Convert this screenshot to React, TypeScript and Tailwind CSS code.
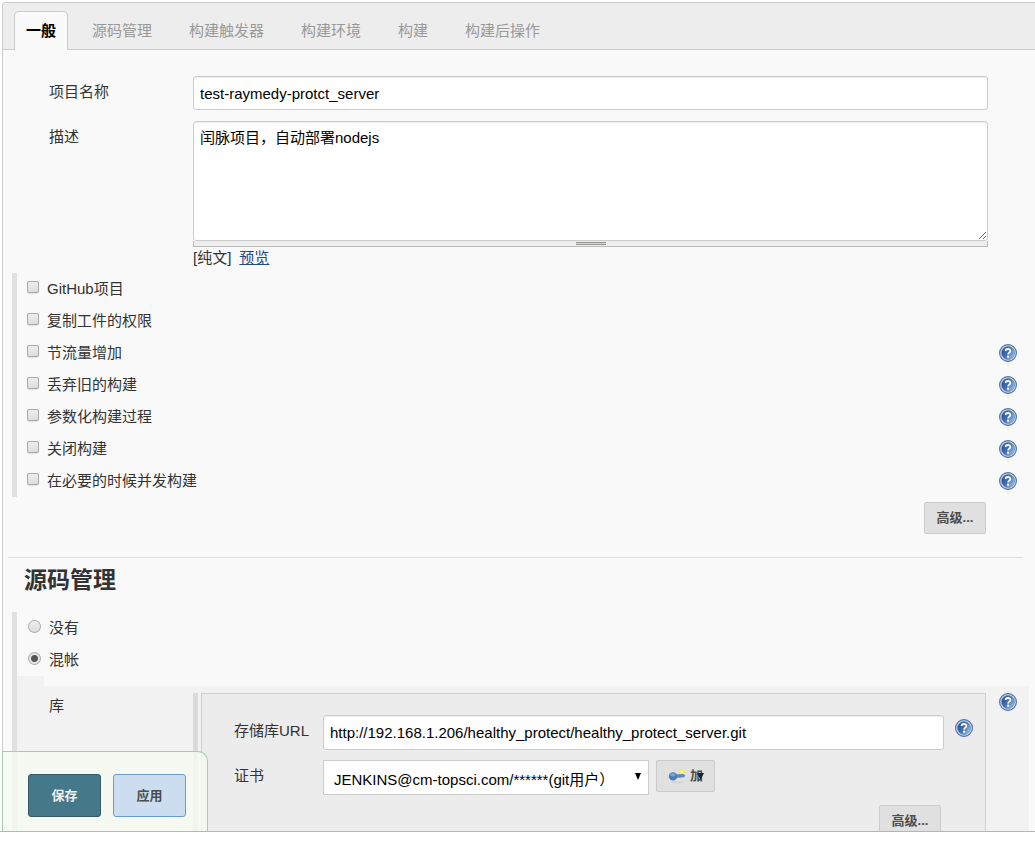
import React from "react";

const tabs = ["一般", "源码管理", "构建触发器", "构建环境", "构建", "构建后操作"];

const options = [
  { id: "github", label: "GitHub项目", help: false },
  { id: "copy-artifact", label: "复制工件的权限", help: false },
  { id: "throttle", label: "节流量增加", help: true },
  { id: "discard", label: "丢弃旧的构建", help: true },
  { id: "params", label: "参数化构建过程", help: true },
  { id: "disable", label: "关闭构建", help: true },
  { id: "concurrent", label: "在必要的时候并发构建", help: true },
];

const inputClass =
  "min-w-0 flex-1 rounded-[3px] border border-[#ccc] bg-white px-1.5 text-black shadow-[inset_0_1px_1px_rgba(0,0,0,0.075)] outline-none";

const radioClass =
  "mb-1 h-[13px] w-[13px] appearance-none rounded-full border border-[#a8a8a8] bg-linear-to-b from-[#eee] to-[#dcdcdc] checked:bg-[radial-gradient(circle,#555_0_3px,#e4e4e4_4px)]";

const greyButton =
  "h-8 rounded-[2px] border border-[#ccc] bg-[#e0e0e0] text-[13px] font-bold text-[#4d4d4d]";

const HelpButton = () => (
  <button type="button" aria-label="帮助" className="shrink-0">
    <svg className="block h-[18px] w-[18px]" viewBox="0 0 18 18">
      <defs>
        <linearGradient id="help-fill" x1="0" y1="0.2" x2="1" y2="0.8">
          <stop offset="0" stopColor="#24508f" />
          <stop offset="0.5" stopColor="#4873b0" />
          <stop offset="1" stopColor="#a9c4e4" />
        </linearGradient>
      </defs>
      <circle cx="9" cy="9" r="8.4" fill="#c9d9ec" stroke="#4a70a6" strokeWidth="1.1" />
      <circle cx="9" cy="9" r="6.5" fill="url(#help-fill)" stroke="#5f86bb" strokeWidth="0.6" />
      <path
        d="M6.6 7.1 C6.6 4.3 11.4 4.3 11.4 7 C11.4 8.7 9.1 8.6 9.1 10.5"
        fill="none"
        stroke="#fff"
        strokeWidth="1.8"
      />
      <rect x="8.1" y="11.7" width="2" height="2" fill="#fff" />
    </svg>
  </button>
);

const KeyIcon = () => (
  <svg className="h-4 w-[18px]" viewBox="0 0 18 16">
    <ellipse cx="9" cy="14.4" rx="6" ry="0.9" fill="#d0d0d0" />
    <circle cx="14" cy="3.8" r="2.9" fill="#f5ec5a" />
    <circle cx="14" cy="3.8" r="1.4" fill="#fff67a" />
    <path d="M6 6.4 L15.5 6 L17.2 7.6 L16 9.6 L14 9.2 L12.5 9.8 L6 9.8 Z" fill="#5a8ac0" />
    <circle cx="5" cy="8.4" r="4.2" fill="#4a7db8" />
    <ellipse cx="4.8" cy="6.8" rx="2.8" ry="1.6" fill="#7ba4d2" />
  </svg>
);

const App = () => {
  return (
    <div className="flex h-screen flex-col bg-white pb-[11px] font-['Liberation_Sans','Noto_Sans_CJK_SC',sans-serif] text-[15px] leading-5 text-[#333]">
      <main className="relative flex-1 overflow-hidden border-b border-[#b5b5b5] pt-0.5 pl-0.5">
        <div className="min-h-full rounded-tl-[4px] border-t border-l border-[#ccc] bg-[#f9f9f9]">
          {/* Tabs */}
          <nav className="flex h-[47px] items-end gap-[11px] rounded-tl-[3px] border-b border-[#ccc] bg-[#ededed] pl-[11px]">
            {tabs.map((tab, i) => (
              <a
                key={tab}
                href="#"
                className={
                  i === 0
                    ? "-mb-px h-[39px] rounded-t-[5px] border border-b-0 border-[#ccc] bg-[#f9f9f9] px-[11px] leading-[38px] font-bold text-black"
                    : "-mb-px h-[39px] border border-b-0 border-transparent px-3 leading-[38px] text-[#999]"
                }
              >
                {tab}
              </a>
            ))}
          </nav>

          <form>
            {/* General */}
            <div className="flex flex-col gap-[11px] pt-[26px] pr-[47px] pl-[46px]">
              <div className="flex">
                <label htmlFor="name" className="w-36 leading-8">
                  项目名称
                </label>
                <input
                  id="name"
                  className={`${inputClass} h-[34px]`}
                  defaultValue="test-raymedy-protct_server"
                />
              </div>
              <div className="flex">
                <label htmlFor="description" className="w-36 leading-8">
                  描述
                </label>
                <div className="flex min-w-0 flex-1 flex-col">
                  <textarea
                    id="description"
                    className={`${inputClass} h-[120px] flex-none resize-y py-1.5`}
                    defaultValue="闰脉项目，自动部署nodejs"
                  />
                  <div className="flex h-[6px] justify-center border border-t-0 border-[#bbb] bg-[#eee]">
                    <div className="mt-px h-[3px] w-[30px] border-y border-[#8d918a] bg-[#ddd]" />
                  </div>
                  <div className="flex gap-2 leading-[22px]">
                    <span>[纯文]</span>
                    <a href="#" className="text-[#204a87] underline">
                      预览
                    </a>
                  </div>
                </div>
              </div>
            </div>

            <div className="mt-1 ml-[9px] border-l-[5px] border-[#e0e0e0] pr-[18px] pl-2.5">
              {options.map((option) => (
                <div key={option.id} className="flex h-8 items-center gap-2">
                  <input
                    id={option.id}
                    type="checkbox"
                    className="mb-1 h-3 w-3 appearance-none rounded-[2px] border border-[#a8a8a8] bg-linear-to-b from-[#eee] to-[#dcdcdc] shadow-[0_1px_1px_rgba(0,0,0,0.1)] checked:bg-[#888]"
                  />
                  <label htmlFor={option.id} className="flex-1">
                    {option.label}
                  </label>
                  {option.help && <HelpButton />}
                </div>
              ))}
            </div>
            <div className="flex justify-end pt-[5px] pr-[49px]">
              <button type="button" className={`${greyButton} w-[62px]`}>
                高级...
              </button>
            </div>

            {/* Source code management */}
            <h2 className="mt-[23px] mr-3 ml-[5px] border-t border-[#ddd] pt-1.5 pl-4 text-[23px] leading-8 font-bold">
              源码管理
            </h2>
            <div className="mt-4 ml-[9px] border-l-[5px] border-[#e0e0e0]">
              <div className="flex h-8 items-center gap-2 pl-[11px]">
                <input id="scm-none" name="scm" type="radio" className={radioClass} />
                <label htmlFor="scm-none">没有</label>
              </div>
              <div className="flex h-8 items-center gap-2 pl-[11px]">
                <input
                  id="scm-git"
                  name="scm"
                  type="radio"
                  defaultChecked
                  className={radioClass}
                />
                <label htmlFor="scm-git">混帐</label>
              </div>
              <div className="h-2.5 w-[27px] bg-[#f2f2f2]" />
              <div className="mr-1.5 flex bg-[#f2f2f2] pt-[7px] pr-3 pl-8">
                <div className="w-36 leading-[26px]">库</div>
                <div className="mr-[3px] w-[5px] bg-[#dadada]" />
                <div className="min-w-0 flex-1 border border-[#d0d0d0] bg-[#ececec] pt-[21px] pr-3 pb-6 pl-8">
                  <div className="flex">
                    <label htmlFor="repo-url" className="w-[89px] leading-8">
                      存储库URL
                    </label>
                    <input
                      id="repo-url"
                      className={`${inputClass} h-[35px]`}
                      defaultValue="http://192.168.1.206/healthy_protect/healthy_protect_server.git"
                    />
                    <div className="mt-1 ml-[11px]">
                      <HelpButton />
                    </div>
                  </div>
                  <div className="mt-2.5 flex items-start">
                    <label htmlFor="credentials" className="w-[89px] leading-8">
                      证书
                    </label>
                    <div className="relative w-[326px]">
                      <select
                        id="credentials"
                        className="h-[35px] w-full appearance-none border border-[#ccc] bg-white pt-1 pl-2.5 text-black"
                      >
                        <option>JENKINS@cm-topsci.com/******(git用户）</option>
                      </select>
                      <svg
                        className="pointer-events-none absolute top-[13px] right-2 h-[7px] w-[6px]"
                        viewBox="0 0 6 7"
                      >
                        <path d="M0 0H6L3 7Z" fill="#000" />
                      </svg>
                    </div>
                    <button
                      type="button"
                      className={`${greyButton} ml-[7px] flex w-[59px] items-center justify-center gap-1`}
                    >
                      <KeyIcon />
                      <span className="relative">
                        加
                        <svg
                          className="absolute top-[7px] -right-px h-[7px] w-[7px]"
                          viewBox="0 0 7 7"
                        >
                          <path d="M0 0H7L3.5 7Z" fill="#222" />
                        </svg>
                      </span>
                    </button>
                  </div>
                  <div className="mt-2.5 flex justify-end pr-8">
                    <button type="button" className={`${greyButton} w-[62px]`}>
                      高级...
                    </button>
                  </div>
                </div>
                <div className="ml-[13px]">
                  <HelpButton />
                </div>
              </div>
            </div>
          </form>
        </div>

        {/* Sticky save bar */}
        <div className="absolute bottom-0 left-0.5 flex gap-3 rounded-tr-[10px] border border-b-0 border-[#a5cbb0] bg-[#f6faf0]/80 pt-[22px] pr-[21px] pb-3.5 pl-[25px] text-[13px] font-bold">
          <button
            type="submit"
            className="h-[43px] w-[73px] rounded-[3px] border border-[#355a6b] bg-[#457888] text-[#eee]"
          >
            保存
          </button>
          <button
            type="button"
            className="h-[43px] w-[73px] rounded-[3px] border border-[#6a9ad4] bg-[#cbddee] text-[#4d4d4d]"
          >
            应用
          </button>
        </div>
      </main>
    </div>
  );
};

export default App;
